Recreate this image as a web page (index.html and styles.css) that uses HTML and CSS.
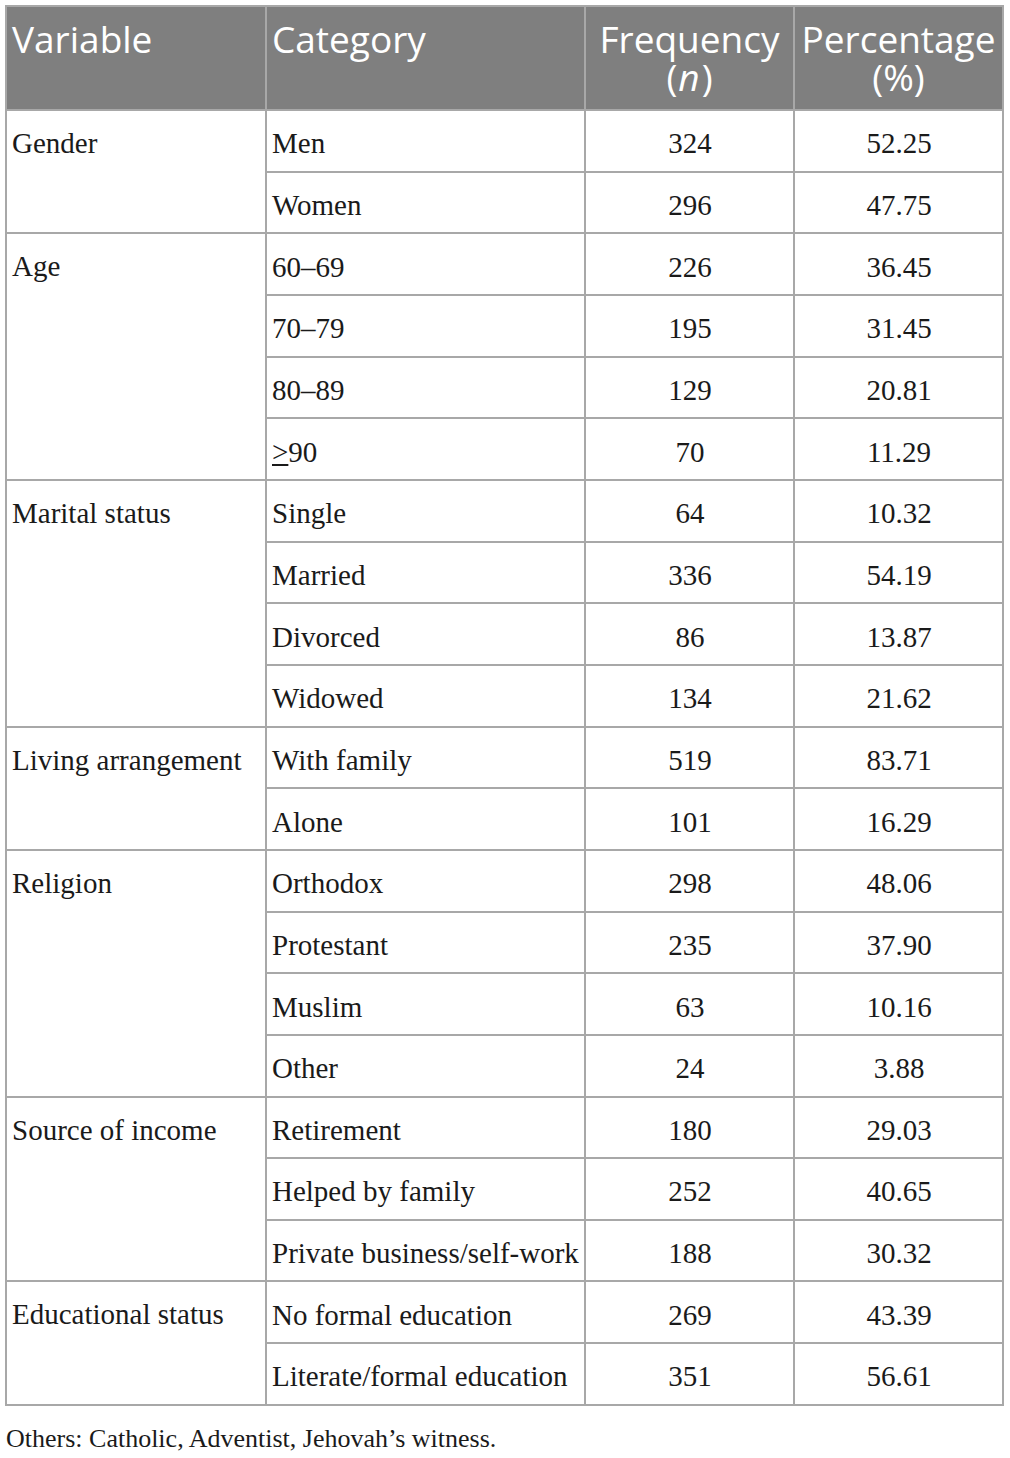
FILE: index.html
```html
<!DOCTYPE html>
<html lang="en">
<head>
    <meta charset="UTF-8">
    <meta name="viewport" content="width=device-width, initial-scale=1.0">
    <title>Sociodemographic characteristics</title>
    <link rel="stylesheet" href="styles.css">
</head>
<body>
    <table id="demographics">
        <colgroup>
            <col class="col-var">
            <col class="col-cat">
            <col class="col-num">
            <col class="col-num">
        </colgroup>
        <thead>
            <tr>
                <th>Variable</th>
                <th>Category</th>
                <th class="num">Frequency<br>(<i>n</i>)</th>
                <th class="num">Percentage<br>(%)</th>
            </tr>
        </thead>
        <tbody>
            <tr><td rowspan="2" class="var">Gender</td><td>Men</td><td class="num">324</td><td class="num">52.25</td></tr>
            <tr><td>Women</td><td class="num">296</td><td class="num">47.75</td></tr>
            <tr><td rowspan="4" class="var">Age</td><td>60–69</td><td class="num">226</td><td class="num">36.45</td></tr>
            <tr><td>70–79</td><td class="num">195</td><td class="num">31.45</td></tr>
            <tr><td>80–89</td><td class="num">129</td><td class="num">20.81</td></tr>
            <tr><td><u>&gt;</u>90</td><td class="num">70</td><td class="num">11.29</td></tr>
            <tr><td rowspan="4" class="var">Marital status</td><td>Single</td><td class="num">64</td><td class="num">10.32</td></tr>
            <tr><td>Married</td><td class="num">336</td><td class="num">54.19</td></tr>
            <tr><td>Divorced</td><td class="num">86</td><td class="num">13.87</td></tr>
            <tr><td>Widowed</td><td class="num">134</td><td class="num">21.62</td></tr>
            <tr><td rowspan="2" class="var">Living arrangement</td><td>With family</td><td class="num">519</td><td class="num">83.71</td></tr>
            <tr><td>Alone</td><td class="num">101</td><td class="num">16.29</td></tr>
            <tr><td rowspan="4" class="var">Religion</td><td>Orthodox</td><td class="num">298</td><td class="num">48.06</td></tr>
            <tr><td>Protestant</td><td class="num">235</td><td class="num">37.90</td></tr>
            <tr><td>Muslim</td><td class="num">63</td><td class="num">10.16</td></tr>
            <tr><td>Other</td><td class="num">24</td><td class="num">3.88</td></tr>
            <tr><td rowspan="3" class="var">Source of income</td><td>Retirement</td><td class="num">180</td><td class="num">29.03</td></tr>
            <tr><td>Helped by family</td><td class="num">252</td><td class="num">40.65</td></tr>
            <tr><td>Private business/self-work</td><td class="num">188</td><td class="num">30.32</td></tr>
            <tr><td rowspan="2" class="var">Educational status</td><td>No formal education</td><td class="num">269</td><td class="num">43.39</td></tr>
            <tr><td>Literate/formal education</td><td class="num">351</td><td class="num">56.61</td></tr>
        </tbody>
    </table>
    <p class="note">Others: Catholic, Adventist, Jehovah’s witness.</p>
</body>
</html>
```

FILE: styles.css
```css
body {
    margin: 0;
    padding: 5px 6px 0 5px;
    background-color: #fff;
    color: #1a1a1a;
    font-family: "Liberation Serif", "DejaVu Serif", serif;
}
#demographics {
    border-collapse: collapse;
    table-layout: fixed;
    width: 998px;
    border: 2px solid #a8a8a8;
}
.col-var {
    width: 260px;
}
.col-cat {
    width: 319px;
}
.col-num {
    width: 209px;
}
th {
    background-color: #7f7f7f;
    color: #fff;
    font-family: "Open Sans", "Noto Sans", sans-serif;
    font-weight: normal;
    font-size: 37px;
    line-height: 38px;
    text-align: left;
    vertical-align: top;
    padding: 13px 4px 13px 5px;
    height: 104px;
    box-sizing: border-box;
    border: 2px solid #a8a8a8;
}
th.num {
    text-align: center;
    padding: 13px 0;
}
th i {
    padding: 0 2px 0 1px;
}
td {
    font-size: 29px;
    height: 61.67px;
    box-sizing: border-box;
    padding: 6px 4px 0 5px;
    vertical-align: middle;
    border: 2px solid #a8a8a8;
    white-space: nowrap;
}
td.var {
    vertical-align: top;
    padding-top: 16px;
}
td.num {
    text-align: center;
}
u {
    text-decoration-thickness: 2px;
    text-underline-offset: 2px;
}
.note {
    margin: 18px 0 0 1px;
    font-size: 26px;
}
```
